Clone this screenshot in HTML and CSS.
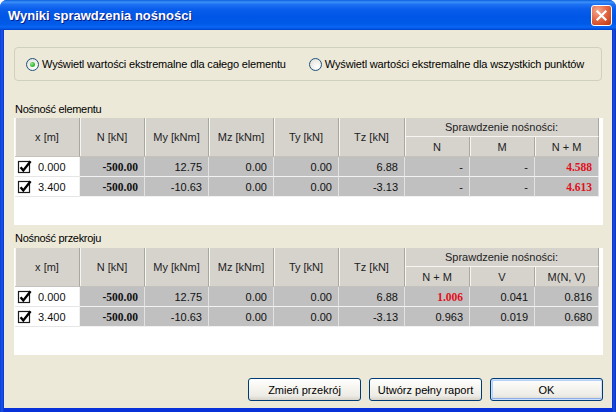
FILE: index.html
```html
<!DOCTYPE html>
<html lang="pl">
<head>
<meta charset="utf-8">
<title>Wyniki sprawdzenia nośności</title>
<link rel="stylesheet" href="styles.css">
</head>
<body>
<div class="window">
  <div class="titlebar">
    <span class="title">Wyniki sprawdzenia nośności</span>
    <span class="close"><svg width="13" height="13" viewBox="0 0 13 13"><path d="M2.5 2.5 L10.5 10.5 M10.5 2.5 L2.5 10.5" stroke="#fff" stroke-width="2.2" stroke-linecap="square"/></svg></span>
  </div>
  <div class="client">
    <div class="group">
      <label class="opt"><span class="radio on"></span>Wyświetl wartości ekstremalne dla całego elementu</label>
      <label class="opt second"><span class="radio"></span>Wyświetl wartości ekstremalne dla wszystkich punktów</label>
    </div>

    <div class="section-label first">Nośność elementu</div>
    <div class="list">
      <table class="grid">
        <colgroup><col class="w65"><col class="w65"><col class="w64"><col class="w65"><col class="w65"><col class="w66"><col class="w65"><col class="w65"><col class="w64"></colgroup>
        <thead>
          <tr class="h1"><th rowspan="2">x [m]</th><th rowspan="2">N [kN]</th><th rowspan="2">My [kNm]</th><th rowspan="2">Mz [kNm]</th><th rowspan="2">Ty [kN]</th><th rowspan="2">Tz [kN]</th><th colspan="3" class="grp">Sprawdzenie nośności:</th></tr>
          <tr class="h2"><th class="sub">N</th><th class="sub">M</th><th class="sub">N + M</th></tr>
        </thead>
        <tbody>
          <tr><td class="chk"><svg class="cb" width="15" height="15" viewBox="0 0 15 15"><rect x="1.5" y="2.5" width="11" height="11" fill="#fff" stroke="#1a1a1a" stroke-width="1.2"/><path d="M3.6 8.2 L6.3 11.4 L13.6 2.2" fill="none" stroke="#000" stroke-width="2.4"/></svg>0.000</td><td class="b">-500.00</td><td>12.75</td><td>0.00</td><td>0.00</td><td>6.88</td><td>-</td><td>-</td><td class="b red">4.588</td></tr>
          <tr><td class="chk"><svg class="cb" width="15" height="15" viewBox="0 0 15 15"><rect x="1.5" y="2.5" width="11" height="11" fill="#fff" stroke="#1a1a1a" stroke-width="1.2"/><path d="M3.6 8.2 L6.3 11.4 L13.6 2.2" fill="none" stroke="#000" stroke-width="2.4"/></svg>3.400</td><td class="b">-500.00</td><td>-10.63</td><td>0.00</td><td>0.00</td><td>-3.13</td><td>-</td><td>-</td><td class="b red">4.613</td></tr>
        </tbody>
      </table>
    </div>

    <div class="section-label">Nośność przekroju</div>
    <div class="list">
      <table class="grid">
        <colgroup><col class="w65"><col class="w65"><col class="w64"><col class="w65"><col class="w65"><col class="w66"><col class="w65"><col class="w65"><col class="w64"></colgroup>
        <thead>
          <tr class="h1"><th rowspan="2">x [m]</th><th rowspan="2">N [kN]</th><th rowspan="2">My [kNm]</th><th rowspan="2">Mz [kNm]</th><th rowspan="2">Ty [kN]</th><th rowspan="2">Tz [kN]</th><th colspan="3" class="grp">Sprawdzenie nośności:</th></tr>
          <tr class="h2"><th class="sub">N + M</th><th class="sub">V</th><th class="sub">M(N, V)</th></tr>
        </thead>
        <tbody>
          <tr><td class="chk"><svg class="cb" width="15" height="15" viewBox="0 0 15 15"><rect x="1.5" y="2.5" width="11" height="11" fill="#fff" stroke="#1a1a1a" stroke-width="1.2"/><path d="M3.6 8.2 L6.3 11.4 L13.6 2.2" fill="none" stroke="#000" stroke-width="2.4"/></svg>0.000</td><td class="b">-500.00</td><td>12.75</td><td>0.00</td><td>0.00</td><td>6.88</td><td class="b red">1.006</td><td>0.041</td><td>0.816</td></tr>
          <tr><td class="chk"><svg class="cb" width="15" height="15" viewBox="0 0 15 15"><rect x="1.5" y="2.5" width="11" height="11" fill="#fff" stroke="#1a1a1a" stroke-width="1.2"/><path d="M3.6 8.2 L6.3 11.4 L13.6 2.2" fill="none" stroke="#000" stroke-width="2.4"/></svg>3.400</td><td class="b">-500.00</td><td>-10.63</td><td>0.00</td><td>0.00</td><td>-3.13</td><td>0.963</td><td>0.019</td><td>0.680</td></tr>
        </tbody>
      </table>
    </div>

    <div class="buttons">
      <button class="btn">Zmień przekrój</button>
      <button class="btn">Utwórz pełny raport</button>
      <button class="btn default">OK</button>
    </div>
  </div>
</div>
</body>
</html>
```

FILE: styles.css
```css
* { box-sizing: border-box; }
html, body { margin: 0; padding: 0; background: #fff; }
body { width: 616px; height: 412px; overflow: hidden; font-family: "Liberation Sans", Arial, sans-serif; font-size: 11px; color: #000; }

.window {
  width: 616px; height: 412px;
  display: flex; flex-direction: column;
  background: linear-gradient(to right, #0a3fd0 0, #1a56e8 2px, #0831d9 4px, #0831d9 612px, #1650e0 614px, #0a2fb8 616px);
  border-radius: 7px 7px 0 0;
  overflow: hidden;
}

.titlebar {
  height: 30px; flex: none;
  display: flex; align-items: center; justify-content: space-between;
  padding: 0 4px 0 8px;
  background: linear-gradient(to bottom, #0a5edb 0%, #3d92fa 7%, #1e72f2 14%, #0a5eec 30%, #0056e6 55%, #005ae8 80%, #0a66f4 90%, #0354e0 96%, #003fc8 100%);
}
.title {
  color: #fff; font-weight: bold; font-size: 13px;
  text-shadow: 1px 1px 0 #0a1a86;
}
.close {
  width: 21px; height: 21px; margin-top: 1px;
  border: 1px solid #fff; border-radius: 3px;
  display: flex; align-items: center; justify-content: center;
  background: radial-gradient(circle at 30% 25%, #f4a98f 0%, #e66a46 45%, #c8431b 85%, #b63a12 100%);
}

.client {
  flex: 1;
  margin: 0 4px 4px 4px;
  background: #ece9d8;
  display: flex; flex-direction: column;
  padding: 17px 10px 7px 10px;
}

.group {
  height: 34px; flex: none;
  border: 1px solid #d0d0bf; border-radius: 4px;
  display: flex; align-items: center;
  padding-left: 11px;
}
.opt { display: flex; align-items: center; gap: 3px; color: #000; letter-spacing: -0.15px; }
.opt.second { margin-left: 23px; }
.radio {
  width: 13px; height: 13px; border-radius: 50%;
  border: 1px solid #1c5180;
  background: radial-gradient(circle at 65% 70%, #fff 0%, #f2f1ec 40%, #dcd9cf 100%);
  display: flex; align-items: center; justify-content: center;
}
.radio.on::after {
  content: ""; width: 5px; height: 5px; border-radius: 50%;
  background: radial-gradient(circle at 35% 35%, #9be59a 0%, #3fbf3c 50%, #21a121 100%);
}

.section-label { height: 14px; line-height: 14px; margin-top: 6px; margin-bottom: 3px; padding-left: 1px; flex: none; letter-spacing: -0.3px; }
.section-label.first { margin-top: 21px; margin-bottom: 2px; }

.list {
  height: 107px; width: 589px; flex: none;
  background: #fff;
  padding-left: 1px;
}

.grid {
  table-layout: fixed;
  border-collapse: separate; border-spacing: 0;
  width: 584px;
  font-size: 11px;
}
.w64 { width: 64px; }
.w65 { width: 65px; }
.w66 { width: 66px; }

.grid th {
  font-weight: normal; color: #222;
  background: #d6d3cd;
  border-right: 1px solid #a9a79e;
  box-shadow: inset 1px 0 0 #f6f5f2;
  padding: 0; text-align: center;
  white-space: nowrap;
}
.grid tr.h1 th { height: 19px; }
.grid tr.h1 th[rowspan] { height: 39px; border-bottom: 1px solid #c4c2ba; }
.grid th.grp { border-bottom: 1px solid #f6f5f2; box-shadow: inset 1px 0 0 #f6f5f2; }
.grid tr.h2 th { height: 20px; border-bottom: 1px solid #c4c2ba; }

.grid td {
  height: 20px;
  background: #c0c0c0;
  border-right: 1px solid #e2e2e2;
  border-bottom: 1px solid #f2f2f2;
  padding: 0 6px 0 0;
  text-align: right;
  white-space: nowrap;
  color: #111;
}
.grid td.chk {
  background: #fff; text-align: left;
  padding: 0 0 0 2px;
  border-right: 1px solid #f0f0f0;
  border-bottom: 1px solid #e6e6e6;
}
.cb { vertical-align: -3px; margin-right: 6px; }
.grid td.b { font-family: "Liberation Serif", "Times New Roman", serif; font-weight: bold; font-size: 11.5px; }
.grid td.red { color: #e0101c; }

.buttons {
  margin-top: auto;
  display: flex; justify-content: flex-end; gap: 8px;
  margin-right: -1px;
}
.btn {
  width: 113px; height: 23px;
  font-family: "Liberation Sans", Arial, sans-serif; font-size: 11px; color: #000;
  border: 1px solid #003c74; border-radius: 3px;
  background: linear-gradient(to bottom, #ffffff 0%, #f6f5f0 40%, #ecebe5 80%, #d8d3c8 100%);
  padding: 0;
}
.btn.default {
  box-shadow: inset 0 0 0 1px #cde0fb, inset 0 -1px 0 1px #8cacea, inset 1px 1px 0 1px #b7d0f5;
}
```
